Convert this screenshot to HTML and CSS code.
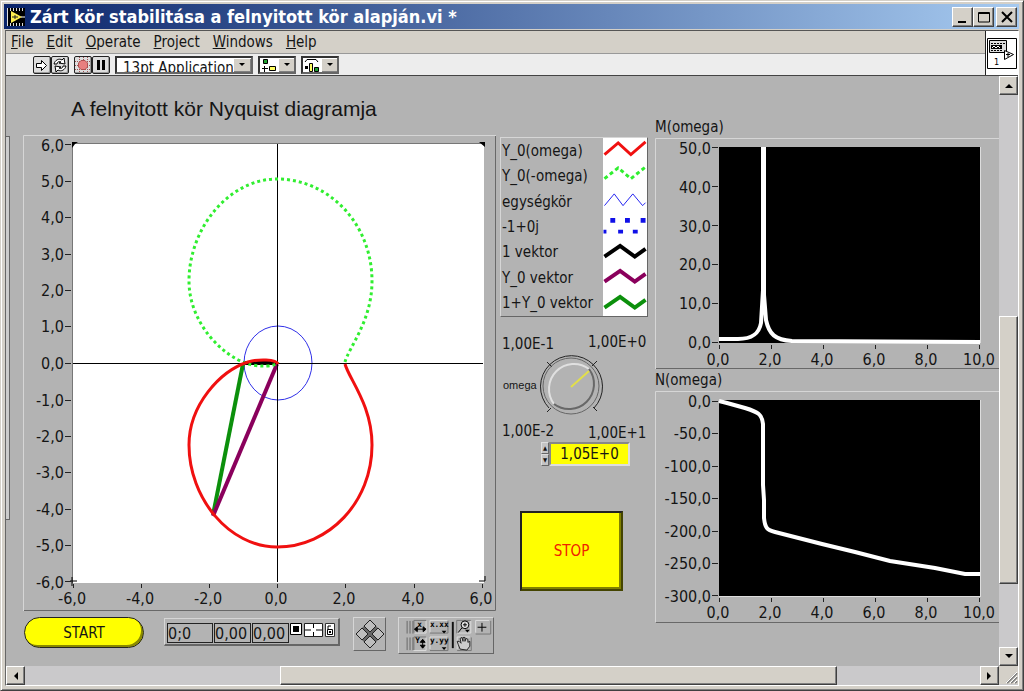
FILE: index.html
```html
<!DOCTYPE html>
<html lang="hu">
<head>
<meta charset="utf-8">
<title>Zárt kör stabilitása a felnyitott kör alapján.vi</title>
<link rel="stylesheet" href="styles.css">
</head>
<body>
<div class="window">
  <header class="titlebar">
    <svg class="app-icon" width="20" height="20" viewBox="0 0 20 20" aria-hidden="true">
      <path d="M1 1h18v18H1z" fill="#000"/>
      <path d="M1.500 1v18M4.500 1v3M7.500 1v3M10.500 1v3M13.500 1v3M16.500 1v3M4.500 16v3M7.500 16v3M10.500 16v3M13.500 16v3M16.500 16v3" stroke="#ddd"/>
      <path d="M5 4l11 6-11 6z" fill="#ffee50"/>
      <path d="M6 10h6M9 8v4" stroke="#222" stroke-width="1"/>
      <path d="M15 10h4" stroke="#fff"/>
    </svg>
    <h1 class="title">Zárt kör stabilitása a felnyitott kör alapján.vi *</h1>
    <div class="window-buttons">
      <button class="win-btn" aria-label="Minimize"><svg width="16" height="16"><path d="M3 13h8" stroke="#000" stroke-width="2"/></svg></button>
      <button class="win-btn" aria-label="Maximize"><svg width="16" height="16"><path d="M2.500 3.500h11v9.500h-11zM2 4.500h12" fill="none" stroke="#000"/></svg></button>
      <button class="win-btn close" aria-label="Close"><svg width="16" height="16"><path d="M3 3l10 10M13 3L3 13" stroke="#000" stroke-width="2"/></svg></button>
    </div>
  </header>

  <div class="frame">
    <div class="bars">
      <div class="bars-main">
        <nav class="menu">
          <a href="#"><u>F</u>ile</a><a href="#"><u>E</u>dit</a><a href="#"><u>O</u>perate</a><a href="#"><u>P</u>roject</a><a href="#"><u>W</u>indows</a><a href="#"><u>H</u>elp</a>
        </nav>
        <div class="toolbar">
          <div class="tool-pair">
            <button class="tool" aria-label="Run"><svg width="16" height="16"><path d="M2.500 6.500h5v-3l5 5-5 5v-3h-5z" fill="#fff" stroke="#000"/></svg></button>
            <button class="tool" aria-label="Run continuously"><svg width="16" height="16"><path d="M2 7c1-4 5-6 8-4l2-2 1 6-6-1 2-1c-2-1-4 0-4 2zM14 9c-1 4-5 6-8 4l-2 2-1-6 6 1-2 1c2 1 4 0 4-2z" fill="#fff" stroke="#000"/></svg></button>
          </div>
          <div class="tool-pair">
            <button class="tool" aria-label="Abort"><svg width="16" height="16"><path d="M0 4.500h16M0 8.500h16M0 12.500h16M4.500 0v16M8.500 0v16M12.500 0v16" stroke="#a05050" stroke-dasharray="1 1"/><path d="M6 3.500h4L12.500 6v4L10 12.500H6L3.500 10V6z" fill="#e88080" stroke="#b05050"/></svg></button>
            <button class="tool" aria-label="Pause"><svg width="16" height="16"><path d="M5.500 3v10M10.500 3v10" stroke="#000" stroke-width="3"/></svg></button>
          </div>
          <div class="combo font-combo">
            <select aria-label="Font"><option>13pt Application</option></select>
            <span class="drop" aria-hidden="true"></span>
          </div>
          <button class="combo" aria-label="Align objects">
            <svg width="18" height="15"><path d="M3.500 1.500h4v4h-4z" fill="#20a030" stroke="#000"/><path d="M4.500 8v6M2 10.500h6" stroke="#000"/><path d="M9.500 8.500h6v4h-6z" fill="#ffff60" stroke="#000"/></svg>
            <span class="drop"></span>
          </button>
          <button class="combo" aria-label="Distribute objects">
            <svg width="18" height="15"><path d="M2 4l2-2.500h9L15 4" fill="none" stroke="#000"/><path d="M2 8h3v3H2z"/><path d="M6.500 5.500h3v8h-3z" fill="#ffff60" stroke="#000"/><path d="M11.500 9.500h4v4h-4z" fill="#20a030" stroke="#000"/></svg>
            <span class="drop"></span>
          </button>
        </div>
      </div>
      <div class="vi-slot">
        <svg width="30" height="31" viewBox="0 0 30 31" role="img" aria-label="VI icon">
          <path d="M.500 .500h29v30H.500z" fill="#fff" stroke="#000"/>
          <path d="M2.500 2.500h17v12h-17z" fill="#ddd" stroke="#000"/>
          <path d="M4 5.500h14M4 12.500h12" stroke="#000" stroke-dasharray="2 1"/>
          <path d="M4 9h11" stroke="#000" stroke-width="4"/><path d="M5 10l2-2 2 2 2-2 2 2" fill="none" stroke="#fff"/>
          <path d="M17.500 12.500l9 4-9 5z" fill="#fff" stroke="#000"/><path d="M19 16.500h4M21 15v4" stroke="#000"/>
          <text class="vi-num" x="7" y="27">1</text>
        </svg>
      </div>
    </div>

    <div class="work">
      <main class="panel">
        <div class="edge"></div>

        <section class="nyquist">
          <h2 class="heading">A felnyitott kör Nyquist diagramja</h2>
          <svg class="graph" viewBox="23 135 473 476" role="img" aria-label="Nyquist diagram">
            <path d="M23.500 611V135.500H496" fill="none" stroke="#d6d6d6"/>
            <path d="M24 610.500H495.500V136" fill="none" stroke="#686868"/>
            <path d="M72 143h412v440H72z" fill="#fff"/>
            <path d="M72.500 583V143.500H484" fill="none" stroke="#777"/>
            <path d="M72 142h6l-3 2-3 4zM485 142h-6l6 5z"/>
            <path d="M72 577v9M70 581h7M479 581h6v-5" fill="none" stroke="#000"/>
            <path d="M65 144.500h6M65 181.500h6M65 217.500h6M65 254.500h6M65 290.500h6M65 326.500h6M65 363.500h6M65 400.500h6M65 436.500h6M65 472.500h6M65 509.500h6M65 545.500h6M65 581.500h6M73.500 584v4M141.500 584v4M209.500 584v4M277.500 584v4M345.500 584v4M414.500 584v4M482.500 584v4" stroke="#222"/>
            <path class="vector" d="M243 363H278" stroke="#000"/>
            <ellipse cx="278" cy="363" rx="34" ry="37" class="unit"/>
            <path class="vector" d="M243 364L213 515" stroke="#0c900c"/>
            <path class="vector" d="M213 516L277 364" stroke="#8a005c"/>
            <path d="M73 363.500H483M277.500 144V582" stroke="#000"/>
            <g transform="matrix(1 0 0 -1 0 726)"><path class="locus mirror" d="M345 364C349 379 372 405 372 445C372 502 329 547 277 547C229 547 189 498 189 445C189 405 220 371 248 362C258 359 276 359 278 364"/></g>
            <path class="locus" d="M345 364C349 379 372 405 372 445C372 502 329 547 277 547C229 547 189 498 189 445C189 405 220 371 248 362C258 359 276 359 278 364"/>
            <g class="y-labels">
              <text x="64" y="151">6,0</text><text x="64" y="187">5,0</text><text x="64" y="223">4,0</text><text x="64" y="260">3,0</text><text x="64" y="296">2,0</text><text x="64" y="332">1,0</text><text x="64" y="369">0,0</text><text x="64" y="406">-1,0</text><text x="64" y="442">-2,0</text><text x="64" y="478">-3,0</text><text x="64" y="515">-4,0</text><text x="64" y="551">-5,0</text><text x="64" y="588">-6,0</text>
            </g>
            <g class="x-labels">
              <text x="72" y="604">-6,0</text><text x="140" y="604">-4,0</text><text x="208" y="604">-2,0</text><text x="276" y="604">0,0</text><text x="344" y="604">2,0</text><text x="413" y="604">4,0</text><text x="481" y="604">6,0</text>
            </g>
          </svg>

          <div class="controls">
            <button class="start">START</button>
            <div class="cursor-box">
              <input class="cursor-name" value="0;0" aria-label="Cursor name">
              <input class="cursor-val" value="0,00" aria-label="Cursor X">
              <input class="cursor-val" value="0,00" aria-label="Cursor Y">
              <svg class="cursor-icons" width="46" height="15" viewBox="0 0 46 15" aria-hidden="true">
                <path d="M.500 .500h11v11H.500z" fill="#fff" stroke="#000"/><path d="M3 3h6v6H3z"/>
                <path d="M14.500 .500h18v13h-18z" fill="#fff" stroke="#222"/><path d="M15 7h6M26 7h6M23.500 1v4M23.500 9v4" stroke="#000"/>
                <path d="M35.500 .500h9v13h-9z" fill="#fff" stroke="#333"/><path d="M37.500 6.500h5v5h-5zM38 6V3h3" fill="none" stroke="#000"/><path d="M39 8h2v2h-2z"/>
              </svg>
            </div>
            <button class="diamond" aria-label="Move cursor">
              <svg width="30" height="30" viewBox="0 0 30 30"><path d="M15 1l14 14-14 14L1 15z" fill="#666"/><path d="M15 1l6 6-6 6-6-6zM15 17l6 6-6 6-6-6zM7 9l6 6-6 6-6-6zM23 9l6 6-6 6-6-6z" fill="#bdbdbd" stroke="#222"/></svg>
            </button>
            <svg class="palette" width="96" height="37" viewBox="0 0 95 36" role="img" aria-label="Graph palette">
              <g fill="none" stroke="#666"><path d="M7.500 3v13M10.500 3v13M13.500 3v13M7.500 20v13M10.500 20v13M13.500 20v13"/></g>
              <g fill="none" stroke="#dedede"><path d="M14 15.500h13V3M31 15V2.500h18M14 33.500h13V20M31 32V19.500h18M58 15.500h15V3M78 15V2.500h14M59 32V19.500h13"/></g>
              <g fill="none" stroke="#777"><path d="M14.500 16V2.500H27M31 15.500h18.500V3M14.500 33V19.500H27M31 33.500h18.500V20M58.500 16V2.500H73M78 16.500h15.500V3M59 33.500h14.500V20"/></g>
              <path d="M54.500 4v27" stroke="#111" stroke-width="2"/>
              <g class="glyphs"><text x="18" y="9">x</text><text x="31" y="9">x.xx</text><text x="16" y="26">Y</text><text x="31" y="26">y.yy</text></g>
              <path d="M16 11.500h10M18 9l-3 2.500 3 2.500zM24 9l3 2.500-3 2.500zM23.500 22v9M21 25l2.500-3 2.500 3zM21 28l2.500 3 2.500-3z" stroke="#000"/>
              <path d="M43 13h5l-2.500 3zM43 30h5l-2.500 3zM67 12h5l-2.500 3z"/>
              <circle cx="67" cy="7" r="4" fill="#ddd" stroke="#000"/><path d="M65 7h4M67 5v4M64 10l-4 5M80 9.500h9M84.500 5v9" stroke="#000"/>
              <path d="M62 32l-2-5-1-3h2l2 2-1-5 2-1 1 4V20h2v4l1-3 2 1v3l2-1v5l-3 4z" fill="#ccc" stroke="#222"/>
            </svg>
          </div>
        </section>

        <section class="side">
          <ul class="legend">
            <li><span>Y_0(omega)</span><svg viewBox="0 0 44 26"><path d="M1 17L15 5L28 17L43 4" fill="none" stroke="#f01010" stroke-width="3"/></svg></li>
            <li><span>Y_0(-omega)</span><svg viewBox="0 0 44 26"><path d="M1 16L15 5L28 16L43 4" fill="none" stroke="#30ee30" stroke-width="3" stroke-dasharray="4 3"/></svg></li>
            <li><span>egységkör</span><svg viewBox="0 0 44 26"><path d="M1 17L11 5L20 17L30 5L40 17L43 14" fill="none" stroke="#2020f0"/></svg></li>
            <li><span>-1+0j</span><svg viewBox="0 0 44 26"><path d="M7 4h5v5H7zM22 4h5v5h-5zM38 4h5v5h-5zM0 16h3v4H0zM15 16h5v4h-5zM30 16h5v4h-5z" fill="#1010e8"/></svg></li>
            <li><span>1 vektor</span><svg viewBox="0 0 44 26"><path d="M1 17L17 6L32 17L43 9" fill="none" stroke="#000" stroke-width="4"/></svg></li>
            <li><span>Y_0 vektor</span><svg viewBox="0 0 44 26"><path d="M1 17L17 6L32 17L43 9" fill="none" stroke="#8a005c" stroke-width="4"/></svg></li>
            <li><span>1+Y_0 vektor</span><svg viewBox="0 0 44 26"><path d="M1 17L17 6L32 17L43 9" fill="none" stroke="#0c900c" stroke-width="4"/></svg></li>
          </ul>
          <svg class="knob" viewBox="500 331 148 110" role="img" aria-label="omega">
            <path d="M549 408A31 31 0 1 1 594 408" fill="none" stroke="#222"/>
            <path d="M547 362l5 5M597 361l-5 5M547 412l4-4M597 411l-4-4" stroke="#222"/>
            <circle cx="571" cy="386" r="28" fill="none" stroke="#666"/>
            <path d="M554 404A25 25 0 0 1 589 369" fill="none" stroke="#e0e0e0" stroke-width="2"/>
            <path d="M554 404A25 25 0 0 0 589 369" fill="none" stroke="#686868" stroke-width="2"/>
            <path d="M571 387L589 371" stroke="#e2df48" stroke-width="2"/>
            <text x="502" y="349">1,00E-1</text><text x="588" y="347">1,00E+0</text>
            <text x="502" y="436">1,00E-2</text><text x="588" y="438">1,00E+1</text>
            <text class="small" x="503" y="389">omega</text>
          </svg>
          <div class="digital">
            <span class="spin"><button aria-label="Increase">▲</button><button aria-label="Decrease">▼</button></span>
            <input value="1,05E+0" aria-label="omega">
          </div>
          <button class="stop">STOP</button>
        </section>

        <section class="response">
          <h3 class="caption">M(omega)</h3>
          <svg class="graph" viewBox="655 138 344 232" role="img" aria-label="M(omega)">
            <path d="M655.500 369V138.500H999" fill="none" stroke="#d6d6d6"/><path d="M656 368.500H999" stroke="#686868"/>
            <path d="M719 147h261v196H719z"/><path d="M980.500 147V343" stroke="#ddd"/>
            <path d="M712 147.500h6M712 186.500h6M712 225.500h6M712 264.500h6M712 303.500h6M712 342.500h6M719.500 345v4M771.500 345v4M823.500 345v4M875.500 345v4M927.500 345v4M979.500 345v4" stroke="#222"/>
            <path class="response-line" d="M719 339H738C752 339 759 334 761 323L763 290V149H764V295L766 320C769 334 775 340 792 341L980 342"/>
            <g class="y-labels"><text x="711" y="154">50,0</text><text x="711" y="193">40,0</text><text x="711" y="232">30,0</text><text x="711" y="270">20,0</text><text x="711" y="309">10,0</text><text x="711" y="348">0,0</text></g>
            <g class="x-labels"><text x="718" y="365">0,0</text><text x="770" y="365">2,0</text><text x="822" y="365">4,0</text><text x="874" y="365">6,0</text><text x="926" y="365">8,0</text><text x="979" y="365">10,0</text></g>
          </svg>
          <h3 class="caption">N(omega)</h3>
          <svg class="graph" viewBox="655 391 344 232" role="img" aria-label="N(omega)">
            <path d="M655.500 622V391.500H999" fill="none" stroke="#d6d6d6"/><path d="M656 622.500H999" stroke="#686868"/>
            <path d="M719 400h261v196H719z"/><path d="M980.500 400V597M719 596.500h262" stroke="#ddd"/>
            <path d="M712 401.500h6M712 433.500h6M712 466.500h6M712 498.500h6M712 531.500h6M712 563.500h6M712 595.500h6M719.500 598v4M771.500 598v4M823.500 598v4M875.500 598v4M927.500 598v4M979.500 598v4" stroke="#222"/>
            <path class="response-line" d="M719 401L727 403L745 408C758 412 762 414 763 424V485L764 500V518C765 528 767 530 775 532L822 544L855 552L890 561L935 568L965 574L980 574"/>
            <g class="y-labels"><text x="711" y="407">0,0</text><text x="711" y="439">-50,0</text><text x="711" y="472">-100,0</text><text x="711" y="504">-150,0</text><text x="711" y="537">-200,0</text><text x="711" y="569">-250,0</text><text x="711" y="602">-300,0</text></g>
            <g class="x-labels"><text x="718" y="618">0,0</text><text x="770" y="618">2,0</text><text x="822" y="618">4,0</text><text x="874" y="618">6,0</text><text x="926" y="618">8,0</text><text x="979" y="618">10,0</text></g>
          </svg>
        </section>
      </main>
      <div class="vscroll">
        <button class="sb" aria-label="Scroll up"><svg width="8" height="5"><path d="M0 5h8L4 1z"/></svg></button>
        <div class="v-before"></div><div class="thumb v-thumb"></div><div class="v-after"></div>
        <button class="sb" aria-label="Scroll down"><svg width="8" height="5"><path d="M0 0h8L4 4z"/></svg></button>
      </div>
    </div>

    <div class="hscroll">
      <button class="sb" aria-label="Scroll left"><svg width="5" height="8"><path d="M5 0v8L1 4z"/></svg></button>
      <div class="h-before"></div><div class="thumb h-thumb"></div><div class="h-after"></div>
      <button class="sb" aria-label="Scroll right"><svg width="5" height="8"><path d="M0 0v8l4-4z"/></svg></button>
      <svg class="grip" width="19" height="18"><path d="M8 17L18 7M12 17l6-6M16 17l2-2" stroke="#808080" stroke-width="2"/><path d="M7 17L18 6M11 17l7-7M15 17l3-3" stroke="#fff"/></svg>
    </div>
  </div>
</div>
</body>
</html>
```
FILE: styles.css
```css
* { box-sizing: border-box; }
body {
  margin: 0;
  background: #d4d0c8;
  color: #151515;
  font: 15px "DejaVu Sans Condensed", "DejaVu Sans", sans-serif;
}
button, input, select { font: inherit; color: inherit; padding: 0; border-radius: 0; }
button { display: flex; align-items: center; justify-content: center; }
svg { display: block; flex: none; }
h1, h2, h3, ul { margin: 0; padding: 0; font-weight: normal; }

.window {
  display: flex;
  flex-direction: column;
  min-height: 100vh;
  padding: 2px 4px 4px 2px;
  border: 1px solid;
  border-color: #d4d0c8 #404040 #404040 #d4d0c8;
  box-shadow: inset 1px 1px #fff, inset -1px -1px #808080;
}

/* Title bar */
.titlebar {
  display: flex;
  align-items: center;
  height: 25px;
  margin: 1px 0 1px 1px;
  padding: 0 2px;
  gap: 4px;
  background: linear-gradient(90deg, #0a246a, #a6caf0);
}
.title { flex: 1; color: #fff; font-size: 18px; font-weight: bold; line-height: 24px; white-space: nowrap; }
.window-buttons { display: flex; }
.win-btn, .sb, .thumb {
  background: #d4d0c8;
  border: 1px solid;
  border-color: #fff #404040 #404040 #fff;
  box-shadow: inset -1px -1px #808080;
}
.win-btn { width: 21px; height: 20px; }
.close { margin-left: 2px; }

/* Menu and tool bars */
.frame {
  flex: 1;
  display: flex;
  flex-direction: column;
  margin-left: 2px;
  border: 1px solid;
  border-color: #555 #fff #fff #666;
}
.bars { display: flex; height: 45px; border-bottom: 1px solid #444; }
.bars-main { flex: 1; }
.menu {
  display: flex;
  align-items: center;
  height: 23px;
  padding-left: 5px;
  gap: 13px;
  border-bottom: 1px solid #999;
}
.menu a { color: inherit; text-decoration: none; }
.toolbar {
  display: flex;
  align-items: center;
  height: 21px;
  padding-left: 27px;
  gap: 5px;
  background: #ededed;
}
.tool-pair { display: flex; }
.tool { width: 18px; height: 18px; border: 1px solid #222; border-radius: 2px; background: #dedede; box-shadow: inset -1px -1px #999; }
.combo {
  display: flex;
  justify-content: space-between;
  align-items: flex-start;
  height: 18px;
  width: 38px;
  border: 2px solid;
  border-color: #333 #666 #666 #333;
  background: #fff;
  overflow: hidden;
}
.font-combo { width: 138px; }
.font-combo select {
  flex: 1;
  min-width: 0;
  height: 21px;
  padding-left: 6px;
  appearance: none;
  border: 0;
  background: #fff;
  line-height: 20px;
}
.drop {
  display: flex;
  align-items: center;
  justify-content: center;
  flex: none;
  width: 18px;
  height: 14px;
  background: #d4d0c8;
  box-shadow: inset 1px 1px #fff, inset -1px -1px #808080;
}
.drop::before { content: ""; border: 3px solid transparent; border-top-color: #000; border-bottom: 0; }
.vi-slot { display: flex; align-items: center; justify-content: center; width: 33px; background: #fff; border-left: 1px solid #222; }
.vi-num { font-size: 9px; }

/* Front panel */
.work { flex: 1; display: flex; }
.panel {
  flex: 1;
  display: grid;
  grid-template-columns: 4px minmax(0, 486fr) minmax(0, 152fr) minmax(0, 351fr);
  align-items: start;
  background: #b3b3b3;
  overflow: hidden;
}
.edge { height: 384px; margin-top: 60px; border: 1px solid #666; border-left: 0; background: #ccc; }
.nyquist { margin-left: 13px; padding-top: 20px; }
.heading { height: 39px; line-height: 26px; padding-left: 48px; font-family: "Liberation Sans", Arial, sans-serif; font-size: 21px; white-space: nowrap; }
.graph { width: 100%; height: auto; }
.graph text, .knob text { fill: #151515; }
.y-labels text { text-anchor: end; font-size: 16px; }
.x-labels text { text-anchor: middle; font-size: 16px; }
.locus { fill: none; stroke: #f01010; stroke-width: 3; }
.mirror { stroke: #30ee30; stroke-dasharray: 3 3; }
.unit { fill: none; stroke: #3030e8; }
.vector { stroke-width: 4; }
.response-line { fill: none; stroke: #fff; stroke-width: 4; }

.controls { display: flex; align-items: flex-start; padding-top: 6px; }
.start {
  width: 120px;
  height: 31px;
  margin-left: 1px;
  border: 1px solid #222;
  border-radius: 16px;
  background: #ff0;
  box-shadow: inset -2px -2px #8a8a00;
}
.cursor-box, .diamond, .palette {
  background: #b3b3b3;
  border: 1px solid;
  border-color: #d6d6d6 #666 #666 #d6d6d6;
}
.cursor-box { display: flex; gap: 1px; align-items: flex-start; margin-left: 20px; width: 176px; height: 28px; padding: 4px 2px 2px; border-right-width: 2px; border-bottom-width: 2px; margin-top: 1px; }
.cursor-box input { min-width: 0; height: 20px; border: 1px solid #222; background: #b3b3b3; font-size: 16px; }
.cursor-name { width: 46px; }
.cursor-val { width: 37px; }
.diamond { width: 33px; height: 34px; margin-left: 13px; }
.palette { margin-left: 12px; }
.glyphs text { font: bold 8px "DejaVu Sans Mono", monospace; }

.side { margin-left: 4px; padding-top: 61px; }
.legend { display: grid; grid-template-rows: repeat(7, 1fr); list-style: none; height: 180px; border: 1px solid; border-color: #d6d6d6 #666 #666 #d6d6d6; }
.legend li { display: flex; justify-content: space-between; align-items: center; min-height: 0; padding-left: 1px; white-space: nowrap; }
.legend svg { width: 44px; height: 100%; background: #fff; }
.knob { width: 100%; height: auto; margin-top: 14px; }
.knob .small { font: 11px "Liberation Sans", Arial, sans-serif; }
.digital { display: flex; height: 24px; margin: 1px 18px 0 41px; }
.digital input { min-width: 0; flex: 1; background: #ff0; border: 2px solid; border-color: #888 #ddd #ddd #888; text-align: center; }
.spin { display: flex; flex-direction: column; width: 8px; }
.spin button { flex: 1; min-height: 0; border: 1px solid; border-color: #ddd #666 #666 #ddd; background: #c4c4c4; font-size: 6px; line-height: 6px; }
.stop {
  width: 103px;
  height: 80px;
  margin: 45px 0 0 20px;
  background: #ff0;
  color: #f02000;
  border: 2px solid;
  border-color: #222 #444400 #444400 #222;
  box-shadow: inset -2px -2px #808000;
}

.response { margin-left: 7px; padding-top: 41px; }
.caption { height: 21px; line-height: 20px; font-size: 15px; }

/* Scroll bars */
.vscroll { display: flex; flex-direction: column; width: 19px; background: #cac9cb; }
.sb { width: 19px; height: 19px; flex: none; }
.v-before { flex: 222; }
.v-thumb { flex: 268; }
.v-after { flex: 63; }
.hscroll { display: flex; height: 19px; background: #cac9cb; }
.h-before { flex: 256; }
.h-thumb { flex: 557; }
.h-after { flex: 143; }
.grip { background: #d4d0c8; }
```
